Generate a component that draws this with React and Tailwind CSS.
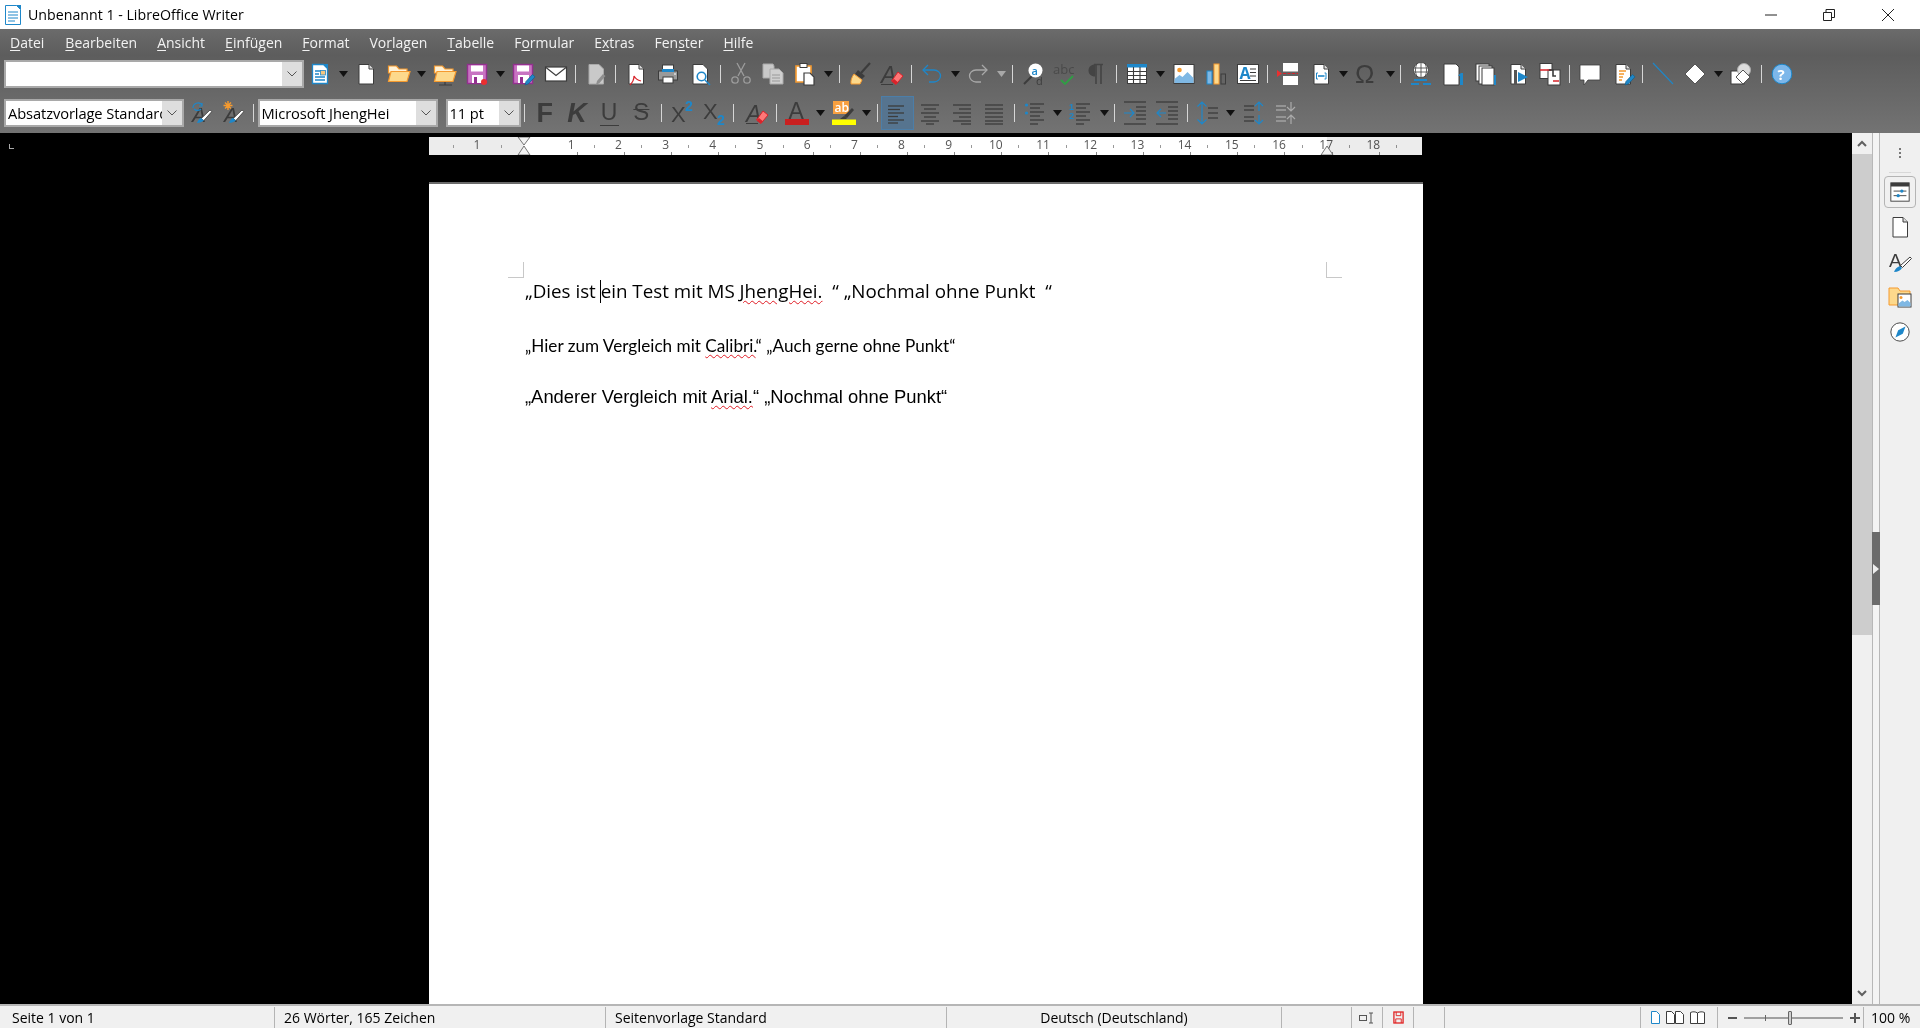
import React from "react";

const INK = "#3c3c3c";
const BLUE = "#1e87c9";
const ORANGE = "#f59a2f";
const CREAM = "#fdd98c";
const RED = "#d8232a";
const PURPLE = "#93308f";
const MUTED = "#9c9c9c";

function Ico({ children, size = 24 }) {
  return (
    <svg viewBox="0 0 24 24" width={size} height={size} fill="none" className="overflow-visible">
      {children}
    </svg>
  );
}

function Page({ stroke = INK, fill = "#fff" }) {
  return (
    <>
      <path d="M5 2.5h10l4.5 4.5v15H5z" fill={fill} stroke={stroke} />
      <path d="M15 2.5V7h4.5" fill="#ddd" stroke={stroke} />
    </>
  );
}

function Lines({ rows, color = INK }) {
  return rows.map(([x1, x2, y], i) => <path key={i} d={`M${x1} ${y}H${x2}`} stroke={color} strokeWidth="1.3" />);
}

function StyleBrush({ top }) {
  return (
    <Ico>
      <text x="3" y="21" fontFamily="'Liberation Sans',sans-serif" fontSize="21" fontStyle="italic" fill={INK}>A</text>
      <path d="M21 9l1.8 1.6-8 9-2.6-2z" fill="#fff" stroke={INK} strokeWidth=".8" />
      <path d="M8 22c1-3 2.5-5 4.2-5l2.6 2.5C13 21 11 22 8 22z" fill={BLUE} />
      {top}
    </Ico>
  );
}

function ClearA() {
  return (
    <Ico>
      <text x="1" y="21" fontFamily="'Liberation Sans',sans-serif" fontSize="23" fontStyle="italic" fill={INK}>A</text>
      <path d="M1 22.5h12" stroke={INK} />
      <path d="M18 10l5 4-7 8.5-4.5-3.5z" fill="#f77" stroke={RED} />
      <path d="M14 17l4 3.2-2 2.3-4.5-3.5z" fill={RED} />
    </Ico>
  );
}

function Folder({ remote }) {
  return (
    <Ico>
      <path d="M1.5 4h8l2.5 3h8v4H1.5z" fill="#fff2d6" stroke={ORANGE} strokeWidth="1.2" />
      <path d="M4 9.5h19l-3 10H1.5z" fill={CREAM} stroke={ORANGE} strokeWidth="1.2" />
      {remote && <path d="M12 20v3M6 23h13" stroke={INK} strokeWidth="1.2" />}
    </Ico>
  );
}

function Save({ children }) {
  return (
    <Ico>
      <rect x="2.5" y="2.5" width="19" height="19" fill="#c873c2" stroke={PURPLE} strokeWidth="1.4" />
      <rect x="6" y="3.5" width="12" height="6" fill="#fff" />
      <rect x="7" y="13" width="11" height="8" fill="#fff" />
      <rect x="9" y="15" width="3" height="6" fill={PURPLE} />
      {children}
    </Ico>
  );
}

const PenBlue = () => <path d="M14 23l1-3.5 6.5-7 2.5 2.3-6.5 7z" fill={BLUE} stroke="#14628f" strokeWidth=".8" />;

const row1 = [
  ["i", <Ico><path d="M4.5 2.5h11l4 4v15h-15z" fill="#fff" stroke={BLUE} strokeWidth="1.3" /><path d="M15 2h5v5z" fill={BLUE} /><path d="M7 9h5M7 12h4M7 15h10M7 18h10" stroke={BLUE} strokeWidth="1.3" /><rect x="12.5" y="8.5" width="5" height="4.5" fill="#f6c780" stroke={BLUE} strokeWidth=".8" /></Ico>],
  ["a"],
  ["i", <Ico><Page /></Ico>],
  ["i", <Ico><Folder /></Ico>],
  ["a"],
  ["i", <Ico><Folder remote /></Ico>],
  ["i", <Ico><Save><circle cx="19" cy="20" r="3" fill="#ea2f2f" /></Save></Ico>],
  ["a"],
  ["i", <Ico><Save><PenBlue /></Save></Ico>],
  ["i", <Ico><rect x="1.5" y="5" width="21" height="14" fill="#fff" stroke={INK} strokeWidth="1.2" /><path d="M2 5.5l10 8 10-8" stroke={INK} strokeWidth="1.2" /></Ico>],
  ["s"],
  ["i", <Ico><path d="M5 2.5h10l4.5 4.5v15H5z" fill="#c9c9c9" stroke="#aaa" /><path d="M12 23l1-4 6-7 2.5 2-6 7z" fill="#8f8f8f" /></Ico>],
  ["s"],
  ["i", <Ico><Page /><path d="M6 23c3-3 4-6 4-9 1 2 3 4 7 5" fill="none" stroke={RED} strokeWidth="1.2" /></Ico>],
  ["i", <Ico><rect x="2.5" y="9" width="19" height="9" fill="#9a9a9a" stroke={INK} /><rect x="6.5" y="3" width="11" height="6" fill="#fff" stroke={INK} /><rect x="6" y="7" width="12" height="3" fill={BLUE} /><rect x="7" y="15" width="10" height="6" fill="#fff" stroke={INK} /><path d="M18 12h2" stroke="#fff" /></Ico>],
  ["i", <Ico><path d="M4 2.5h10l4.5 4.5v15H4z" fill="#fff" stroke={INK} /><circle cx="12.5" cy="14.5" r="4.3" fill="#fff" stroke={BLUE} strokeWidth="1.6" /><path d="M16 18l5 5" stroke={BLUE} strokeWidth="1.5" /></Ico>],
  ["s"],
  ["i", <Ico><path d="M8 1l7 13M16 1L9 14" stroke={MUTED} strokeWidth="1.3" /><circle cx="6" cy="18" r="3.2" stroke={MUTED} strokeWidth="1.3" /><circle cx="18" cy="18" r="3.2" stroke={MUTED} strokeWidth="1.3" /></Ico>],
  ["i", <Ico><path d="M2 2h10l1 2v12H2z" fill="#c9c9c9" stroke="#aaa" /><path d="M9 7h9l4 4v11H9z" fill="#cfcfcf" stroke="#aaa" /><path d="M11 13h8M11 16h8M11 19h8" stroke="#999" /></Ico>],
  ["i", <Ico><path d="M3 4h15v16H3z" fill="#fff" stroke={ORANGE} strokeWidth="1.6" /><rect x="7" y="1.5" width="7" height="4" fill="#fff" stroke={INK} /><path d="M11 11h6l4 4v8H11z" fill="#fff" stroke={INK} strokeWidth="1.2" /></Ico>],
  ["a"],
  ["s"],
  ["i", <Ico><path d="M22 1l-9 10" stroke={INK} strokeWidth="2.2" /><path d="M10 8l7 6-3 3-7-5z" fill={INK} /><path d="M6 12l8 6-2 4H3c-.5-4 1-7 3-10z" fill={CREAM} stroke={ORANGE} /></Ico>],
  ["i", <ClearA />],
  ["s"],
  ["i", <Ico><path d="M8 3L3 8l5 5" stroke={BLUE} strokeWidth="1.3" /><path d="M3 8h11c4 0 6.5 3 6.5 6s-3 6-6.5 6H9" stroke={BLUE} strokeWidth="1.3" /></Ico>],
  ["a"],
  ["i", <Ico><path d="M16 3l5 5-5 5" stroke="#a8a8a8" strokeWidth="1.3" /><path d="M21 8H10c-4 0-6.5 3-6.5 6s3 6 6.5 6h5" stroke="#a8a8a8" strokeWidth="1.3" /></Ico>],
  ["d"],
  ["s"],
  ["i", <Ico><path d="M11 14l-8 8" stroke={INK} strokeWidth="2" /><circle cx="14.5" cy="8.5" r="7" fill="#fff" /><text x="10.5" y="12.5" fontFamily="'Open Sans',sans-serif" fontSize="11" fontWeight="600" fill={BLUE}>a</text><text x="15" y="23" fontFamily="'Open Sans',sans-serif" fontSize="11" fill={INK}>d</text></Ico>],
  ["i", <Ico><text x="0" y="12" fontFamily="'Open Sans',sans-serif" fontSize="13" fill="#4a4a4a">abc</text><path d="M8 18l4 4 8-8" stroke="#2f9e44" strokeWidth="1.8" /></Ico>],
  ["i", <Ico><path d="M10 2.5c-4 0-6.5 2.5-6.5 6s2.5 6 6.5 6z" fill="#444" /><path d="M11 2.5V22M16 2.5V22M9 2.5h9" stroke="#444" strokeWidth="1.6" /></Ico>],
  ["s"],
  ["i", <Ico><rect x="2.5" y="2.5" width="19" height="19" fill="#fff" stroke={INK} /><rect x="2" y="2" width="20" height="3.5" fill={BLUE} /><path d="M2.5 9.5h19M2.5 13.5h19M2.5 17.5h19M8.5 5v17M15 5v17" stroke={INK} strokeWidth="1.1" /></Ico>],
  ["a"],
  ["i", <Ico><rect x="2" y="2.5" width="20" height="19" fill="#fff" stroke={INK} /><circle cx="7.5" cy="8" r="2.3" fill={ORANGE} /><path d="M2.5 21v-4l5-4 3 2 5-5 6 6v5z" fill="#7fb8e4" /></Ico>],
  ["i", <Ico><rect x="3" y="9" width="5" height="13" fill="#7fb8e4" stroke={BLUE} /><rect x="10" y="2" width="5" height="20" fill={CREAM} stroke={ORANGE} /><rect x="17" y="12" width="4.5" height="10" fill="none" stroke={INK} /></Ico>],
  ["i", <Ico><rect x="1.5" y="2.5" width="21" height="19" fill="#fff" stroke={INK} /><text x="3.5" y="17" fontFamily="'Open Sans',sans-serif" fontSize="16" fontWeight="700" fill={BLUE}>A</text><path d="M14 7h6M14 10.5h6M14 14h6M4 18.5h16" stroke={INK} /></Ico>],
  ["s"],
  ["i", <Ico><rect x="7" y="1" width="15" height="8.5" fill="#fff" /><rect x="7" y="14" width="15" height="9" fill="#fff" /><path d="M7 11.5h15" stroke={RED} strokeDasharray="3 1.5" /><path d="M1 8l5 3.5L1 15z" fill="#ea3030" /></Ico>],
  ["i", <Ico><Page /><path d="M9 11H7.5v6H9M15.5 11H17v6h-1.5" stroke={BLUE} /><path d="M9 14h6.5" stroke={BLUE} strokeWidth="1.6" /></Ico>],
  ["a"],
  ["i", <Ico><text x="0" y="21" fontFamily="'Liberation Sans',sans-serif" fontSize="26" fill={INK}>Ω</text></Ico>],
  ["a"],
  ["s"],
  ["i", <Ico><circle cx="12" cy="8" r="7.500" fill="#fff" stroke={INK} strokeWidth=".8" /><path d="M5 6h14M5 10h14M12 1v14M8 1.5c-2 4-2 9 0 13M16 1.5c2 4 2 9 0 13" stroke={INK} strokeWidth=".8" /><path d="M5 18h13M2 22h8M14 22h8" stroke={BLUE} strokeWidth="1.8" /></Ico>],
  ["i", <Ico><path d="M3 2h12l3 3v18H3z" fill="#fff" stroke={INK} /><path d="M19 14v9h3V11h-2l-3 2.5" fill={BLUE} /></Ico>],
  ["i", <Ico><rect x="2" y="2" width="13" height="17" fill="#fff" stroke={INK} /><rect x="5" y="4" width="13" height="18" fill="#fff" stroke={INK} /><rect x="8" y="6" width="12" height="17" fill="#fff" stroke={INK} /><path d="M20 13v10h2V13z" fill={BLUE} /></Ico>],
  ["i", <Ico><Page /><path d="M8 8h3v15H8z" fill="#555" /><path d="M12 10l10 5-10 5z" fill={BLUE} /></Ico>],
  ["i", <Ico><rect x="2" y="1.5" width="12" height="15" fill="#fff" stroke={INK} /><rect x="10" y="8" width="12" height="15" fill="#fff" stroke={INK} /><path d="M2 8h11M15 19h6" stroke={RED} strokeWidth="1.3" /><path d="M11 8h4v6h3" stroke={INK} strokeWidth="1.6" /></Ico>],
  ["s"],
  ["i", <Ico><path d="M2 3h20v15H10l-4 5v-5H2z" fill="#fff" stroke={INK} strokeWidth=".8" /></Ico>],
  ["i", <Ico><Page /><path d="M8 9h7M8 12h5M8 15h4M8 18h3" stroke={ORANGE} strokeWidth="1.3" /><PenBlue /></Ico>],
  ["s"],
  ["i", <Ico><path d="M2 1l20 21" stroke={BLUE} strokeWidth="1.1" /></Ico>],
  ["i", <Ico><path d="M12 2l10 10-10 10L2 12z" fill="#fff" stroke="#555" /></Ico>],
  ["a"],
  ["i", <Ico><rect x="2" y="9" width="13" height="13" fill="#fff" stroke={INK} /><circle cx="15" cy="8" r="6.5" fill="#ddd" stroke="#aaa" /><path d="M14 8l7 7-7 7-7-7z" fill="#fff" stroke="#555" /></Ico>],
  ["s"],
  ["i", <Ico><circle cx="12" cy="12" r="9.8" fill="#7db7ea" stroke={BLUE} /><text x="7.5" y="17.5" fontFamily="'Open Sans',sans-serif" fontSize="15" fontWeight="700" fill="#fff">?</text></Ico>],
];

const alignLeft = [[3, 19, 5], [3, 15, 8.5], [3, 19, 12], [3, 13, 15.5], [3, 19, 19], [3, 13, 22]];
const alignCenter = [[3, 21, 4], [6, 18, 8], [3, 21, 12], [6, 18, 16], [3, 21, 20], [8, 16, 23]];
const alignRight = [[3, 21, 4], [9, 21, 8], [3, 21, 12], [9, 21, 16], [3, 21, 20], [11, 21, 23]];
const alignJust = [[3, 21, 4], [3, 21, 8], [3, 21, 12], [3, 21, 16], [3, 21, 20], [3, 21, 23]];
const LETTER = "'Liberation Sans',sans-serif";

function Letter({ children, bold, italic, size = 24 }) {
  return (
    <span className={`text-[#3c3c3c] font-['Liberation_Sans',sans-serif] leading-none ${bold ? "font-bold" : ""} ${italic ? "italic" : ""}`} style={{ fontSize: size }}>
      {children}
    </span>
  );
}

const row2a = [
  ["i", <StyleBrush top={<path d="M4 7a5 5 0 0 1 9-3M13 2v3h-3M12 8a5 5 0 0 1-7 0" stroke={BLUE} strokeWidth="1.2" />} />],
  ["i", <StyleBrush top={<path d="M7 0v9M2.5 4.5h9M4 1.5l6 6M10 1.5l-6 6" stroke={ORANGE} strokeWidth="1.4" />} />],
  ["s"],
];

const row2b = [
  ["s"],
  ["i", <Letter bold size={27}>F</Letter>],
  ["i", <Letter bold italic size={27}>K</Letter>],
  ["i", <span className="flex flex-col items-center"><Letter size={23}>U</Letter><span className="w-[19px] h-px bg-[#3c3c3c] mt-px" /></span>],
  ["i", <span className="line-through text-[#3c3c3c]"><Letter size={24}>S</Letter></span>],
  ["s"],
  ["i", <Ico><text x="1" y="21" fontFamily={LETTER} fontSize="22" fill={INK}>X</text><text x="15" y="10" fontFamily={LETTER} fontSize="14" fontWeight="700" fill={BLUE}>2</text></Ico>],
  ["i", <Ico><text x="1" y="18" fontFamily={LETTER} fontSize="22" fill={INK}>X</text><text x="15" y="24" fontFamily={LETTER} fontSize="14" fontWeight="700" fill={BLUE}>2</text></Ico>],
  ["s"],
  ["g"],
  ["i", <ClearA />],
  ["s"],
  ["i", <Ico><text x="3.5" y="18" fontFamily={LETTER} fontSize="23" fill={INK}>A</text><rect y="18" width="24" height="6" fill="#c91f1f" /></Ico>],
  ["a"],
  ["i", <Ico><rect x="1" y="0" width="16" height="13" fill="#f8a040" /><text x="2.5" y="11" fontFamily="'Open Sans',sans-serif" fontSize="12" fontWeight="600" fill="#fff">ab</text><path d="M20 7l2 2-7 8-3-2z" fill={INK} /><path d="M8 18l4-3 3 2-1 1z" fill={INK} /><rect y="18.5" width="24" height="5.5" fill="#ffff00" /></Ico>],
  ["a"],
  ["s"],
  ["sel", <Ico><Lines rows={alignLeft} /></Ico>],
  ["i", <Ico><Lines rows={alignCenter} /></Ico>],
  ["i", <Ico><Lines rows={alignRight} /></Ico>],
  ["i", <Ico><Lines rows={alignJust} /></Ico>],
  ["s"],
  ["i", <Ico><circle cx="3.5" cy="4" r="1.6" fill={BLUE} /><circle cx="3.5" cy="12" r="1.6" fill={BLUE} /><Lines rows={[[7, 21, 3], [7, 17, 7], [7, 21, 11], [7, 17, 15], [7, 21, 19], [7, 15, 23]]} /></Ico>],
  ["a"],
  ["i", <Ico><text x="0" y="9" fontFamily={LETTER} fontSize="9" fontWeight="700" fill={BLUE}>1</text><text x="0" y="18" fontFamily={LETTER} fontSize="9" fontWeight="700" fill={BLUE}>2</text><Lines rows={[[7, 21, 3], [7, 17, 7], [7, 21, 11], [7, 17, 15], [7, 21, 19], [7, 15, 23]]} /></Ico>],
  ["a"],
  ["s"],
  ["i", <Ico><path d="M1 12h9M7 8l4 4-4 4" stroke={BLUE} strokeWidth="1.2" /><Lines rows={[[1, 23, 1], [13, 23, 6], [13, 23, 10], [13, 23, 14], [13, 23, 18], [1, 23, 23]]} /></Ico>],
  ["i", <Ico><path d="M11 12H2M6 8l-4 4 4 4" stroke={BLUE} strokeWidth="1.2" /><Lines rows={[[1, 23, 1], [13, 23, 6], [13, 23, 10], [13, 23, 14], [13, 23, 18], [1, 23, 23]]} /></Ico>],
  ["s"],
  ["i", <Ico><path d="M6 1v22M1.5 5.5L6 1l4.500 4.500M1.500 18.500L6 23l4.500-4.500" stroke={BLUE} strokeWidth="1.2" /><Lines rows={[[12, 22, 7], [12, 22, 12], [12, 22, 17]]} /></Ico>],
  ["a"],
  ["i", <Ico><path d="M17 1v9M13 5l4-4 4 4M17 14v9M13 19l4 4 4-4" stroke={BLUE} strokeWidth="1.2" /><Lines rows={[[2, 12, 5], [2, 12, 9], [2, 12, 16], [2, 12, 20]]} /></Ico>],
  ["i", <Ico><path d="M17 1v9M13 6l4 4 4-4M17 14v9M13 18l4-4 4 4" stroke="#ababab" strokeWidth="1.2" /><Lines rows={[[2, 12, 5], [2, 12, 9], [2, 12, 16], [2, 12, 20]]} color="#ababab" /></Ico>],
];

function Item({ kind, node }) {
  if (kind === "g") {
    return <div className="w-[3px] shrink-0" />;
  }
  if (kind === "s") {
    return (
      <div className="w-2 h-[18px] pl-[3px] shrink-0">
        <div className="w-px h-full bg-[#d6d6d6]" />
      </div>
    );
  }
  if (kind === "a" || kind === "d") {
    return (
      <div className="w-[14px] flex justify-center shrink-0">
        <svg width="9" height="6" viewBox="0 0 9 6">
          <path d="M0 0h9L4.500 6z" fill={kind === "a" ? "#111" : "#a8a8a8"} />
        </svg>
      </div>
    );
  }
  if (kind === "sel") {
    return (
      <div className="w-[33px] h-[34px] -ml-px flex items-center justify-center shrink-0 bg-[#56748f] border border-[#4c7ea8]">{node}</div>
    );
  }
  return <div className="w-[32.25px] h-7 flex items-center justify-center shrink-0">{node}</div>;
}

function Tools({ items }) {
  return items.map(([kind, node], i) => <Item key={i} kind={kind} node={node} />);
}

function Combo({ width, text, buttonWidth = "w-5", pad = "pl-[2px]" }) {
  return (
    <div className={`${width} h-7 border-2 border-[#a9a9a9] bg-white flex shrink-0`}>
      <div className={`flex-1 min-w-0 overflow-hidden whitespace-nowrap text-[14.7px] tracking-[-0.1px] leading-[24px] text-black ${pad}`}>{text}</div>
      <div className={`${buttonWidth} bg-[#dedede] flex items-center justify-center shrink-0`}>
        <svg width="10" height="6" viewBox="0 0 10 6">
          <path d="M.5.5L5 5 9.500.5" stroke="#555" fill="none" />
        </svg>
      </div>
    </div>
  );
}

function Menu({ pre, u, post, className }) {
  return (
    <span className={className}>
      {pre}
      <u className="underline-offset-2">{u}</u>
      {post}
    </span>
  );
}

const menus = [
  ["", "D", "atei", "ml-[10px]"],
  ["", "B", "earbeiten", "ml-[21px]"],
  ["", "A", "nsicht", "ml-[20px]"],
  ["", "E", "infügen", "ml-[20px]"],
  ["", "F", "ormat", "ml-[20px]"],
  ["Vo", "r", "lagen", "ml-[20px]"],
  ["", "T", "abelle", "ml-[20px]"],
  ["F", "o", "rmular", "ml-[20px]"],
  ["E", "x", "tras", "ml-[20px]"],
  ["Fen", "s", "ter", "ml-[20px]"],
  ["", "H", "ilfe", "ml-[20px]"],
];

function Ruler() {
  const cells = ["1", "2", "3", "4", "5", "6", "7", "8", "9", "10", "11", "12", "13", "14", "15", "16", "17", "18"];
  return (
    <div className="ml-[429px] w-[993px] h-[18px] shrink-0 bg-white flex relative overflow-hidden text-[12px] leading-[16px] text-[#555] font-['Open_Sans',sans-serif]">
      <div className="w-[95px] bg-[#ececec] flex shrink-0 relative">
        <span className="absolute left-[24px] top-[8px] w-px h-[3px] bg-[#999]" />
        <span className="absolute left-[72px] top-[8px] w-px h-[3px] bg-[#999]" />
        <span className="ml-[24px] w-12 text-center">1</span>
      </div>
      <div className="w-[23.6px] shrink-0" />
      {cells.map((n) => (
        <div key={n} className="w-[47.2px] shrink-0 relative text-center">
          {n}
          <span className="absolute right-0 top-[8px] w-px h-[3px] bg-[#999]" />
          <span className="absolute left-[29px] bottom-0 w-px h-[3px] bg-[#888]" />
        </div>
      ))}
      <div className="absolute right-0 top-0 bottom-0 w-[95px] bg-[#ececec] mix-blend-multiply" />
      <svg className="absolute left-[88px] top-0" width="14" height="18" viewBox="0 0 14 18">
        <path d="M1 0h12L7 8zM1 18h12L7 9z" fill="#f4f4f4" stroke="#555" strokeWidth=".8" />
      </svg>
      <svg className="absolute left-[891px] top-[9px]" width="14" height="9" viewBox="0 0 14 9">
        <path d="M1 9h12L7 0z" fill="#f4f4f4" stroke="#555" strokeWidth=".8" />
      </svg>
    </div>
  );
}

function Squiggle({ children }) {
  return <span className="underline decoration-wavy decoration-[#e01b24] decoration-1 underline-offset-2">{children}</span>;
}

function Document() {
  return (
    <div className="ml-[429px] w-[994px] mt-[27px] flex-1 min-h-0 bg-white border-t-2 border-[#6a6a6a] relative pl-[96px] pt-[93px] overflow-hidden whitespace-nowrap text-black">
      <div className="absolute left-[79px] top-[78px] w-[16px] h-[16px] border-r border-b border-[#c8c8c8]" />
      <div className="absolute left-[897px] top-[78px] w-[16px] h-[16px] border-l border-b border-[#c8c8c8]" />
      <p className="h-7 leading-[28px] text-[18.8px] font-['Open_Sans',sans-serif]">
        <span className="relative">
          „Dies ist <span className="absolute h-[23px] w-px bg-black -ml-px top-[2px]" />
        </span>
        ein Test mit MS <Squiggle>JhengHei.</Squiggle>
        {"\u00a0\u00a0“ „Nochmal ohne Punkt\u00a0\u00a0“"}
      </p>
      <p className="mt-[29px] h-[23px] leading-[23px] text-[17.15px] font-['Lato',sans-serif]">
        „Hier zum Vergleich mit <Squiggle>Calibri.</Squiggle>“ „Auch gerne ohne Punkt“
      </p>
      <p className="mt-[28px] h-[23px] leading-[23px] text-[18.4px] font-['Liberation_Sans',sans-serif]">
        „Anderer Vergleich mit <Squiggle>Arial.</Squiggle>“ „Nochmal ohne Punkt“
      </p>
    </div>
  );
}

function Scrollbar() {
  return (
    <div className="w-5 shrink-0 bg-[#f0f0f0] flex flex-col items-center">
      <div className="h-[21px] flex items-center justify-center shrink-0">
        <svg width="10" height="7" viewBox="0 0 10 7"><path d="M1 6l4-4 4 4" stroke="#606060" strokeWidth="2" fill="none" /></svg>
      </div>
      <div className="w-full h-[481px] bg-[#cdcdcd] shrink-0" />
      <div className="flex-1" />
      <div className="h-[21px] flex items-center justify-center shrink-0">
        <svg width="10" height="7" viewBox="0 0 10 7"><path d="M1 1l4 4 4-4" stroke="#606060" strokeWidth="2" fill="none" /></svg>
      </div>
    </div>
  );
}

function SideIcon({ children, active }) {
  return (
    <div className={`w-8 h-8 mt-[3px] flex items-center justify-center ${active ? "border border-[#b4b4b4] rounded" : ""}`}>{children}</div>
  );
}

function Sidebar() {
  return (
    <>
      <div className="w-2 shrink-0 bg-[#f4f4f4] border-x border-[#b8b8b8] relative">
        <div className="absolute -left-px -right-px top-[399px] h-[73px] bg-[#6b6b6b] flex items-center justify-center">
          <svg width="6" height="10" viewBox="0 0 6 10"><path d="M0 0l6 5-6 5z" fill="#eee" /></svg>
        </div>
      </div>
      <div className="w-10 shrink-0 bg-[#f0f0f0] flex flex-col items-center">
        <div className="h-[39px] w-full flex flex-col items-center gap-[2px] pt-[15px] shrink-0">
          <span className="w-[2px] h-[2px] bg-[#777]" />
          <span className="w-[2px] h-[2px] bg-[#777]" />
          <span className="w-[2px] h-[2px] bg-[#777]" />
        </div>
        <div className="w-[22px] h-px bg-[#d8d8d8] shrink-0" />
        <SideIcon active>
          <Ico size={22}><rect x="2" y="2" width="20" height="20" fill="#fff" stroke={INK} /><rect x="2" y="2" width="20" height="4" fill={INK} /><path d="M5 11h14M5 16h14" stroke={INK} /><circle cx="14" cy="11" r="1.800" fill={BLUE} /><circle cx="10" cy="16" r="1.800" fill={BLUE} /></Ico>
        </SideIcon>
        <SideIcon><Ico><Page /></Ico></SideIcon>
        <SideIcon>
          <Ico><text x="1" y="17" fontFamily={LETTER} fontSize="19" fill={INK}>A</text><path d="M22 7l1.500 1.500-9 9-2-2z" fill="#fff" stroke={INK} /><path d="M6 22c1-3 3-5 6-6l2 2c-1 2-4 4-8 4z" fill={BLUE} /></Ico>
        </SideIcon>
        <SideIcon>
          <Ico><path d="M1 3h9l2 3h10v14H1z" fill={CREAM} stroke={ORANGE} /><rect x="10" y="9" width="13" height="13" fill="#fff" stroke={INK} /><circle cx="13" cy="12.500" r="1.500" fill={ORANGE} /><path d="M10.500 21.500v-3l4-3 2 1.500 3-2 3 3v3.500z" fill="#7fb8e4" /></Ico>
        </SideIcon>
        <SideIcon>
          <Ico size={22}><circle cx="12" cy="12" r="10" fill="#fff" stroke={INK} /><path d="M18 6l-3 8-8 4 3-8z" fill={BLUE} /></Ico>
        </SideIcon>
      </div>
    </>
  );
}

function Cell({ width, children, className = "" }) {
  return (
    <div className={`${width} h-[21px] shrink-0 border-r border-[#b4b4b4] flex items-center ${className}`}>{children}</div>
  );
}

function StatusBar() {
  return (
    <div className="h-6 shrink-0 bg-[#f0f0f0] border-t-2 border-[#b6b6b6] pt-px flex text-[14px] text-black">
      <Cell width="w-[275px]" className="pl-3">Seite 1 von 1</Cell>
      <Cell width="w-[331px]" className="pl-[9px]">26 Wörter, 165 Zeichen</Cell>
      <Cell width="w-[341px]" className="pl-[9px]">Seitenvorlage Standard</Cell>
      <Cell width="w-[335px]" className="justify-center">Deutsch (Deutschland)</Cell>
      <Cell width="w-[70px]" />
      <Cell width="w-[31px]" className="justify-center">
        <svg width="16" height="12" viewBox="0 0 16 12"><rect x="0.500" y="3.500" width="7" height="5" fill="none" stroke="#555" /><path d="M10 1h4M12 1v10M10 11h4" stroke="#555" /></svg>
      </Cell>
      <Cell width="w-[31px]" className="justify-center">
        <svg width="11" height="13" viewBox="0 0 12 14"><path d="M3.500 1v4h5V1M3 13V8.500h6V13" stroke="#e02020" fill="none" /><rect x="1" y="1" width="10" height="12" fill="none" stroke="#e02020" strokeWidth="1.400" /></svg>
      </Cell>
      <Cell width="w-[31px]" />
      <Cell width="w-[196px]" />
      <Cell width="w-[77px]" className="pl-[10px] gap-[6px]">
        <svg width="9" height="13" viewBox="0 0 9 13"><path d="M.5.500h5l3 3v9h-8z" fill="#fff" stroke={BLUE} /></svg>
        <svg width="18" height="13" viewBox="0 0 18 13"><path d="M.5.500h5l3 3v9h-8zM9.500.500h5l3 3v9h-8z" fill="#fff" stroke={INK} /></svg>
        <svg width="15" height="13" viewBox="0 0 15 13"><path d="M7.500 2c-2-1.500-5-1.500-7-.500v11h7zM7.500 2c2-1.500 5-1.500 7-.500v11h-7z" fill="#fff" stroke={INK} /></svg>
      </Cell>
      <Cell width="w-[146px]" className="pl-[10px]">
        <span className="w-[9px] h-[2px] bg-[#555] shrink-0" />
        <div className="w-[99px] h-[2px] bg-[#a0a0a0] mx-[7px] relative shrink-0">
          <span className="absolute left-[21px] -top-[2px] w-px h-[6px] bg-[#666]" />
          <span className="absolute left-[44px] -top-[6px] w-[4px] h-[14px] bg-[#cfcfcf] border border-[#666] rounded-[1px]" />
        </div>
        <span className="relative w-[10px] h-[10px] shrink-0">
          <span className="absolute left-0 top-1 w-[10px] h-[2px] bg-[#555]" />
          <span className="absolute left-1 top-0 w-[2px] h-[10px] bg-[#555]" />
        </span>
      </Cell>
      <div className="flex-1 h-[21px] flex items-center pl-[7px]">100 %</div>
    </div>
  );
}

export default function App() {
  return (
    <div className="w-[1920px] h-[1028px] flex flex-col overflow-hidden bg-black font-['Open_Sans',sans-serif]">
      {/* title bar */}
      <div className="h-[29px] shrink-0 bg-white flex items-center pl-[5px] text-black">
        <svg width="16" height="20" viewBox="0 0 16 20">
          <path d="M.5.500h11l4 4v15H.5z" fill="#fff" stroke={BLUE} />
          <path d="M11 0h5v5z" fill={BLUE} />
          <path d="M3 7h10M3 10h10M3 13h10M3 16h7" stroke={BLUE} />
        </svg>
        <span className="ml-[7px] text-[14.2px]">Unbenannt 1 - LibreOffice Writer</span>
        <div className="flex-1" />
        <svg width="12" height="2" viewBox="0 0 12 2"><path d="M0 1h12" stroke="#222" /></svg>
        <svg className="ml-[46px]" width="12" height="12" viewBox="0 0 12 12"><path d="M.5 3.500h8v8h-8zM3 3.500V.5h8.500v8H8.500" fill="none" stroke="#222" /></svg>
        <svg className="ml-[47px] mr-[26px]" width="12" height="12" viewBox="0 0 12 12"><path d="M0 0l12 12M12 0L0 12" stroke="#222" /></svg>
      </div>

      {/* menu */}
      <div className="h-[26px] shrink-0 flex items-center text-[14px] text-[#f2f2f2] bg-linear-to-b from-[#6b6b6b] to-[#5d5d5d]">
        {menus.map(([pre, u, post, cls]) => (
          <Menu key={pre + u + post} pre={pre} u={u} post={post} className={cls} />
        ))}
      </div>

      {/* toolbars */}
      <div className="h-[78px] shrink-0 pt-[5px] pl-1 flex flex-col gap-[11px] bg-linear-to-b from-[#5d5d5d] to-[#737373]">
        <div className="h-7 flex items-center">
          <Combo width="w-[300px]" text="" />
          <Tools items={row1} />
        </div>
        <div className="h-7 flex items-center">
          <Combo width="w-[180px]" text="Absatzvorlage Standard" buttonWidth="w-[20px]" pad="pl-[2px]" />
          <div className="w-[1px]" />
          <Tools items={row2a} />
          <Combo width="w-[180px]" text="Microsoft JhengHei" />
          <div className="w-2" />
          <Combo width="w-[75px]" text="11 pt" />
          <Tools items={row2b} />
        </div>
      </div>

      {/* body */}
      <div className="flex-1 min-h-0 flex">
        <div className="flex-1 min-w-0 bg-black flex flex-col pt-1 relative">
          <div className="absolute left-[9px] top-[11px] w-[5px] h-[5px] border-l border-b border-[#aaa]" />
          <Ruler />
          <Document />
        </div>
        <Scrollbar />
        <Sidebar />
      </div>

      <StatusBar />
    </div>
  );
}
